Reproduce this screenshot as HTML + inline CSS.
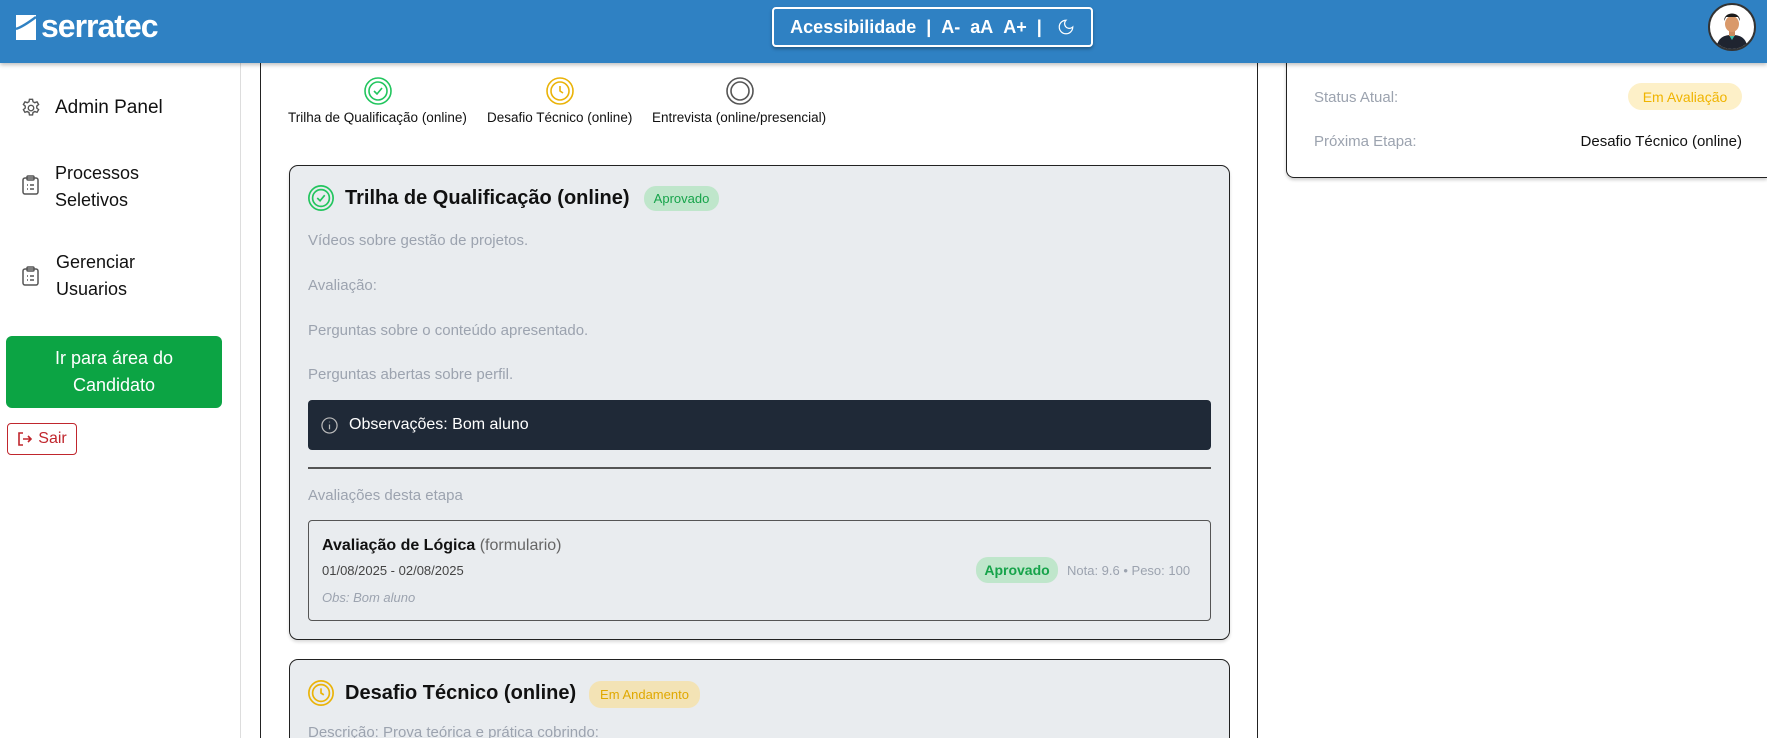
<!DOCTYPE html>
<html><head><meta charset="utf-8"><style>
*{box-sizing:border-box;margin:0;padding:0}
html,body{width:1767px;height:738px;overflow:hidden}
body{background:#fff;font-family:"Liberation Sans",sans-serif;position:relative;color:#111}
#wrap{position:absolute;left:0;top:0;width:1767px;height:738px;overflow:hidden}
.abs{position:absolute}
.hdr{left:0;top:0;width:1767px;height:63px;background:#2f81c3;box-shadow:0 2px 4px rgba(0,0,0,.25);z-index:5}
.gray{color:#9ca3af}
.badge{position:absolute;border-radius:12px;font-size:13px;display:flex;align-items:center;justify-content:center}
</style></head><body><div id="wrap">
<div class="abs hdr">
  <svg class="abs" style="left:16px;top:15px" width="20" height="25" viewBox="0 0 20 25"><path d="M0 0H20V25H0Z" fill="#fff"/><path d="M0 14 C6 12 12 8 20 2" stroke="#2f81c3" stroke-width="2.5" fill="none"/></svg>
  <div class="abs" style="left:41px;top:8px;font-size:32px;font-weight:bold;color:#fff;letter-spacing:-1px">serratec</div>
  <div class="abs" style="left:772px;top:7px;width:321px;height:40px;border:2px solid #fff;border-radius:4px;box-shadow:0 2px 3px rgba(0,0,0,.3);color:#fff;font-weight:bold;font-size:18px;display:flex;align-items:center;justify-content:center">Acessibilidade&nbsp;&nbsp;|&nbsp;&nbsp;A-&nbsp;&nbsp;aA&nbsp;&nbsp;A+&nbsp;&nbsp;|&nbsp;&nbsp;&nbsp;<svg width="18" height="18" viewBox="0 0 24 24"><path d="M12 3a6 6 0 0 0 9 9 9 9 0 1 1-9-9Z" fill="none" stroke="#fff" stroke-width="1.6"/></svg></div>
  <div class="abs" style="left:1708px;top:3px;width:48px;height:48px;border-radius:50%;background:#fff;border:2px solid #333;overflow:hidden">
    <svg width="44" height="44" viewBox="0 0 44 44"><path d="M6 44 C8 32 14 30 22 30 C30 30 36 32 38 44Z" fill="#1f2430"/><path d="M19 30 L22 35 L25 30Z" fill="#3cc0b0"/><rect x="19" y="24" width="6" height="7" fill="#c98a5e"/><ellipse cx="22" cy="19" rx="7" ry="8" fill="#d9996a"/><path d="M14 16 C14 6 30 6 30 16 L28 12 L16 12Z" fill="#1b1b1b"/></svg>
  </div>
</div>

<div class="abs" style="left:0;top:63px;width:241px;height:675px;border-right:1px solid #ddd;background:#fff"></div>
<svg class="abs" style="left:20px;top:97px" width="22" height="22" viewBox="0 0 24 24" fill="none" stroke="#555" stroke-width="1.5"><circle cx="12" cy="12" r="3"/><path d="M10.3 2.5h3.4l.5 2.6 1.9 1.1 2.5-.9 1.7 2.9-2 1.7v2.2l2 1.7-1.7 2.9-2.5-.9-1.9 1.1-.5 2.6h-3.4l-.5-2.6-1.9-1.1-2.5.9-1.7-2.9 2-1.7v-2.2l-2-1.7 1.7-2.9 2.5.9 1.9-1.1z"/></svg>
<div class="abs" style="left:55px;top:97px;font-size:19px">Admin Panel</div>
<svg class="abs" style="left:22px;top:175px" width="17" height="20" viewBox="0 0 17 20" fill="none" stroke="#555" stroke-width="1.5"><rect x="1" y="3" width="15" height="16" rx="2"/><rect x="5" y="1" width="7" height="4" rx="1"/><path d="M5 10h1M8 10h4M5 14h1M8 14h4"/></svg>
<div class="abs" style="left:55px;top:160px;font-size:18px;line-height:27px">Processos<br>Seletivos</div>
<svg class="abs" style="left:22px;top:266px" width="17" height="20" viewBox="0 0 17 20" fill="none" stroke="#555" stroke-width="1.5"><rect x="1" y="3" width="15" height="16" rx="2"/><rect x="5" y="1" width="7" height="4" rx="1"/><path d="M5 10h1M8 10h4M5 14h1M8 14h4"/></svg>
<div class="abs" style="left:56px;top:249px;font-size:18px;line-height:27px">Gerenciar<br>Usuarios</div>
<div class="abs" style="left:6px;top:336px;width:216px;height:72px;background:#0ca444;border-radius:6px;color:#fff;font-size:18px;line-height:27px;text-align:center;padding-top:9px">Ir para área do<br>Candidato</div>
<div class="abs" style="left:7px;top:423px;width:70px;height:32px;border:1px solid #c0262d;border-radius:4px;color:#c0262d;font-size:16px;display:flex;align-items:center;justify-content:center;gap:5px"><svg width="16" height="16" viewBox="0 0 16 16" fill="none" stroke="#c0262d" stroke-width="1.6"><path d="M6 2H2v12h4M6 8h8M11 5l3 3-3 3"/></svg>Sair</div>

<div class="abs" style="left:260px;top:40px;width:998px;height:698px;border:1.5px solid #222;border-bottom:none;border-radius:8px 8px 0 0;background:#fff"></div>
<svg class="abs" style="left:363px;top:76px" width="30" height="30" viewBox="0 0 30 30" fill="none" stroke="#22c55e" stroke-width="1.6"><circle cx="15" cy="15" r="13"/><circle cx="15" cy="15" r="9"/><path d="M11 15l3 3 5-6"/></svg>
<svg class="abs" style="left:545px;top:76px" width="30" height="30" viewBox="0 0 30 30" fill="none" stroke="#eab308" stroke-width="1.6"><circle cx="15" cy="15" r="13"/><circle cx="15" cy="15" r="9"/><path d="M15 10v5l3 2"/></svg>
<svg class="abs" style="left:725px;top:76px" width="30" height="30" viewBox="0 0 30 30" fill="none" stroke="#555" stroke-width="1.6"><circle cx="15" cy="15" r="13"/><circle cx="15" cy="15" r="9"/></svg>
<div class="abs" style="left:288px;top:110px;font-size:13.5px">Trilha de Qualificação (online)</div>
<div class="abs" style="left:487px;top:110px;font-size:13.5px">Desafio Técnico (online)</div>
<div class="abs" style="left:652px;top:110px;font-size:13.5px">Entrevista (online/presencial)</div>

<div class="abs" style="left:289px;top:165px;width:941px;height:475px;background:#e9ecef;border:1.5px solid #222;border-radius:9px;box-shadow:0 2px 3px rgba(0,0,0,.15)"></div>
<svg class="abs" style="left:307px;top:184px" width="28" height="28" viewBox="0 0 30 30" fill="none" stroke="#22c55e" stroke-width="1.8"><circle cx="15" cy="15" r="13"/><circle cx="15" cy="15" r="9"/><path d="M11 15l3 3 5-6"/></svg>
<div class="abs" style="left:345px;top:187px;font-size:20px;font-weight:bold">Trilha de Qualificação (online)</div>
<div class="badge" style="left:644px;top:186px;width:75px;height:25px;background:#bfe6cb;color:#16a34a">Aprovado</div>
<div class="abs gray" style="left:308px;top:232px;font-size:15px">Vídeos sobre gestão de projetos.</div>
<div class="abs gray" style="left:308px;top:277px;font-size:15px">Avaliação:</div>
<div class="abs gray" style="left:308px;top:322px;font-size:15px">Perguntas sobre o conteúdo apresentado.</div>
<div class="abs gray" style="left:308px;top:366px;font-size:15px">Perguntas abertas sobre perfil.</div>
<div class="abs" style="left:308px;top:400px;width:903px;height:50px;background:#1f2937;border-radius:4px"></div>
<svg class="abs" style="left:321px;top:417px" width="17" height="17" viewBox="0 0 18 18" fill="none" stroke="#bbb" stroke-width="1.3"><circle cx="9" cy="9" r="8"/><path d="M9 8v5M9 5v.5"/></svg>
<div class="abs" style="left:349px;top:416px;font-size:16px;color:#fff">Observações: Bom aluno</div>
<div class="abs" style="left:308px;top:467px;width:903px;height:2px;background:#555"></div>
<div class="abs gray" style="left:308px;top:487px;font-size:15px">Avaliações desta etapa</div>
<div class="abs" style="left:308px;top:520px;width:903px;height:101px;border:1.5px solid #555;border-radius:4px"></div>
<div class="abs" style="left:322px;top:537px;font-size:16px"><b>Avaliação de Lógica</b> <span style="color:#666">(formulario)</span></div>
<div class="abs" style="left:322px;top:563px;font-size:13px;color:#444">01/08/2025 - 02/08/2025</div>
<div class="abs gray" style="left:322px;top:590px;font-size:13px;font-style:italic">Obs: Bom aluno</div>
<div class="badge" style="left:976px;top:557px;width:82px;height:26px;background:#bfe6cb;color:#16a34a;font-weight:bold;font-size:14px">Aprovado</div>
<div class="abs gray" style="left:1067px;top:563px;font-size:13px">Nota: 9.6 • Peso: 100</div>

<div class="abs" style="left:289px;top:659px;width:941px;height:79px;background:#e9ecef;border:1.5px solid #222;border-bottom:none;border-radius:9px 9px 0 0"></div>
<svg class="abs" style="left:307px;top:679px" width="28" height="28" viewBox="0 0 30 30" fill="none" stroke="#eab308" stroke-width="1.8"><circle cx="15" cy="15" r="13"/><circle cx="15" cy="15" r="9"/><path d="M15 10v5l3 2"/></svg>
<div class="abs" style="left:345px;top:682px;font-size:20px;font-weight:bold">Desafio Técnico (online)</div>
<div class="badge" style="left:589px;top:681px;width:111px;height:27px;background:#f3e3b5;color:#e0a800">Em Andamento</div>
<div class="abs gray" style="left:308px;top:724px;font-size:15px;height:14px;overflow:hidden;line-height:17px">Descrição: Prova teórica e prática cobrindo:</div>

<div class="abs" style="left:1286px;top:20px;width:481px;height:158px;border:1.5px solid #222;border-right:none;border-radius:8px 0 0 8px;background:#fff;box-shadow:0 2px 3px rgba(0,0,0,.2)"></div>
<div class="abs gray" style="left:1314px;top:89px;font-size:15px">Status Atual:</div>
<div class="badge" style="left:1628px;top:83px;width:114px;height:27px;background:#fdf0c8;color:#f0b400;font-size:14px;border-radius:14px">Em Avaliação</div>
<div class="abs gray" style="left:1314px;top:133px;font-size:15px">Próxima Etapa:</div>
<div class="abs" style="right:25px;top:133px;font-size:15px">Desafio Técnico (online)</div>
</div></body></html>
